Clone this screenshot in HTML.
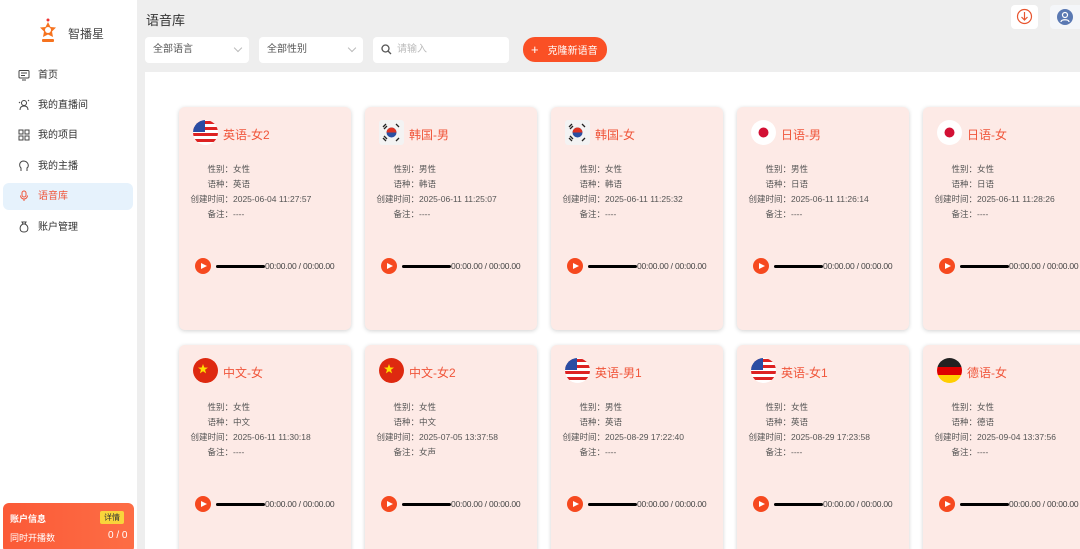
<!DOCTYPE html>
<html style="overflow:hidden;height:549px"><head><meta charset="utf-8"><style>
*{box-sizing:border-box;margin:0;padding:0}
body{width:1080px;height:549px;overflow:hidden;background:#eeeeee;font-family:"Liberation Sans","Noto Sans CJK SC",sans-serif;position:relative;color:#333}
.wrap{position:absolute;left:0;top:0;width:1080px;height:549px;overflow:hidden}
.side{position:absolute;left:0;top:0;width:137px;height:549px;background:#fff}
.logo{position:absolute;left:38px;top:18px}
.brand{position:absolute;left:68px;top:25px;font-size:12px;color:#444}
.mi{position:absolute;left:3px;width:130px;height:27px;font-size:10px;color:#333;line-height:27px;padding-left:35px}
.mi svg{position:absolute;left:15px;top:7px}
.mi.act{background:#e6f2fc;color:#f0553a;border-radius:6px}
.acct{position:absolute;left:3px;top:503px;width:131px;height:50px;background:linear-gradient(90deg,#fb5a37,#fd6d45);border-radius:6px;color:#fff;font-size:9px}
.title{position:absolute;left:146px;top:10px;font-size:13px;color:#333}
.sel{position:absolute;top:37px;height:26px;background:#fff;border-radius:4px;font-size:10px;color:#555;line-height:26px;padding-left:8px}
.chev:after{content:"";position:absolute;right:8px;top:8px;width:5px;height:5px;border-right:1px solid #bbb;border-bottom:1px solid #bbb;transform:rotate(45deg)}
.btn{position:absolute;left:523px;top:37px;width:84px;height:25px;background:#fa5025;border-radius:12px;color:#fff;font-size:10px;line-height:25px;padding-left:8px}
.panel{position:absolute;left:145px;top:72px;width:935px;height:477px;background:#fff}
.card{position:absolute;width:172px;height:223px;background:#fdeae6;border-radius:6px;box-shadow:0 1px 4px rgba(0,0,0,.18)}
.flag{position:absolute;left:14px;top:13px;width:25px;height:25px;border-radius:50%;overflow:hidden}
.ct{position:absolute;left:44px;top:19px;font-size:12px;color:#f0553a}
.info{position:absolute;left:0;top:55px;font-size:8.5px;line-height:15px;color:#555}
.info div{white-space:nowrap}
.info b{display:inline-block;width:54px;text-align:right;font-weight:normal}
.aud{position:absolute;left:16px;top:151px;width:156px;height:16px}
.play{position:absolute;left:0;top:0;width:16px;height:16px;border-radius:50%;background:#f6491f}
.play:after{content:"";position:absolute;left:6px;top:4.5px;border-left:6px solid #fff;border-top:3.5px solid transparent;border-bottom:3.5px solid transparent}
.bar{position:absolute;left:21px;top:7px;width:49px;height:3px;background:#000;border-radius:2px}
.tm{position:absolute;left:70px;top:3px;font-size:8.5px;color:#444;white-space:nowrap;letter-spacing:-0.2px}
</style></head><body><div class="wrap">
<div class="side">
<svg class="logo" width="20" height="26" viewBox="0 0 20 26"><polygon points="10,4 12.5,9 18,9.5 14,13.5 15,19 10,16.5 5,19 6,13.5 2,9.5 7.5,9" fill="#f6731f"/><circle cx="10" cy="12" r="3" fill="#fff"/><circle cx="10" cy="2" r="1.5" fill="#e33"/><rect x="4" y="21" width="12" height="3" fill="#f6731f" rx="1"/></svg>
<div class="brand">智播星</div>
<div class="mi" style="top:62px"><svg width="12" height="12" viewBox="0 0 12 12" fill="none" stroke="#444"><rect x="1" y="1.5" width="10" height="7.5" rx="1"/><path d="M3 4h6M3 6.5h4M4 11h4"/></svg>首页</div>
<div class="mi" style="top:92px"><svg width="12" height="12" viewBox="0 0 12 12" fill="none" stroke="#444"><circle cx="6" cy="4" r="2.5"/><path d="M2 11c0-3 2-4 4-4s4 1 4 4M1 3l1 1M10 2l1-1"/></svg>我的直播间</div>
<div class="mi" style="top:122px"><svg width="12" height="12" viewBox="0 0 12 12" fill="none" stroke="#444"><rect x="1" y="1" width="4" height="4"/><rect x="7" y="1" width="4" height="4"/><rect x="1" y="7" width="4" height="4"/><rect x="7" y="7" width="4" height="4"/></svg>我的项目</div>
<div class="mi" style="top:153px"><svg width="12" height="12" viewBox="0 0 12 12" fill="none" stroke="#444"><path d="M3 11V8C1 6 1 2 5 1c4 0 6 3 5 6l-1 1v3"/></svg>我的主播</div>
<div class="mi act" style="top:183px"><svg width="12" height="12" viewBox="0 0 12 12" fill="none" stroke="#f0553a"><rect x="4" y="1" width="4" height="6" rx="2"/><path d="M2.5 5.5a3.5 3.5 0 007 0M6 9v2"/></svg>语音库</div>
<div class="mi" style="top:214px"><svg width="12" height="12" viewBox="0 0 12 12" fill="none" stroke="#444"><path d="M4 1h4L7 3H5zM5 3C1 5 1 11 6 11s5-6 1-8"/></svg>账户管理</div>
<div class="acct"><div style="position:absolute;left:7px;top:9px;font-weight:bold">账户信息</div><div style="position:absolute;left:97px;top:8px;background:#f9d43b;color:#333;font-size:8px;padding:1px 4px;border-radius:2px">详情</div><div style="position:absolute;left:7px;top:28px">同时开播数</div><div style="position:absolute;left:105px;top:27px;font-size:10px">0 / 0</div></div>
</div>
<div class="title">语音库</div>
<div class="sel chev" style="left:145px;width:104px">全部语言</div>
<div class="sel chev" style="left:259px;width:104px">全部性别</div>
<div class="sel" style="left:373px;width:136px;padding-left:24px;color:#bbb">请输入<svg style="position:absolute;left:8px;top:7px" width="11" height="11" viewBox="0 0 11 11" fill="none" stroke="#555" stroke-width="1.3"><circle cx="4.5" cy="4.5" r="3.5"/><path d="M7 7l3 3"/></svg></div>
<div class="btn"><span style="font-size:13px;margin-right:9px">+</span>克隆新语音</div>
<div style="position:absolute;left:1011px;top:5px;width:27px;height:24px;background:#fff;border-radius:4px"><svg style="position:absolute;left:5px;top:3px" width="17" height="17" viewBox="0 0 17 17" fill="none" stroke="#e8552f" stroke-width="1.2"><circle cx="8.5" cy="8.5" r="7"/><path d="M8.5 4v8M5.5 9l3 3 3-3"/></svg></div>
<div style="position:absolute;left:1050px;top:5px;width:40px;height:24px;background:#f4f6f9;border-radius:4px"><div style="position:absolute;left:7px;top:4px;width:16px;height:16px;border-radius:50%;background:#5a79b3"></div><svg style="position:absolute;left:7px;top:4px" width="16" height="16" viewBox="0 0 16 16" fill="none" stroke="#fff" stroke-width="1.2"><circle cx="8" cy="6" r="2.5"/><path d="M4 13c0-3 8-3 8 0"/></svg></div>
<div class="panel"></div>

<svg width="0" height="0" style="position:absolute">
<defs>
<g id="us"><rect width="25" height="25" fill="#fff"/><rect y="1" width="25" height="3" fill="#d22"/><rect y="7" width="25" height="3" fill="#d22"/><rect y="13" width="25" height="3" fill="#d22"/><rect y="19" width="25" height="3" fill="#d22"/><rect width="12" height="12" fill="#2b4da3"/></g>
<g id="kr"><rect width="25" height="25" fill="#f3f3f3"/><circle cx="12.5" cy="12.5" r="5" fill="#2a4fa2"/><path d="M7.5 12.5a5 5 0 0110 0" fill="#d32"/><path d="M4 7l3-3M5 9l3-3M17 4l3 3M17 21l3-3M4 18l3 3M5 16l3 3" stroke="#222" stroke-width="1.3"/></g>
<g id="jp"><rect width="25" height="25" fill="#fff"/><circle cx="12.5" cy="12.5" r="5" fill="#d21034"/></g>
<g id="cn"><rect width="25" height="25" fill="#de2910"/><polygon points="10,6 11.3,9.5 15,9.6 12,11.8 13.1,15.4 10,13.3 6.9,15.4 8,11.8 5,9.6 8.7,9.5" fill="#ffde00"/></g>
<g id="de"><rect width="25" height="9" fill="#222"/><rect y="9" width="25" height="8" fill="#dd0000"/><rect y="17" width="25" height="8" fill="#ffce00"/></g>
</defs></svg>

<div class="card" style="left:179px;top:107px"><svg class="flag"><use href="#us"/></svg><div class="ct">英语-女2</div><div class="info"><div><b>性别：</b>女性</div><div><b>语种：</b>英语</div><div><b>创建时间：</b>2025-06-04 11:27:57</div><div><b>备注：</b>----</div></div><div class="aud"><div class="play"></div><div class="bar"></div><div class="tm">00:00.00 / 00:00.00</div></div></div>
<div class="card" style="left:365px;top:107px"><svg class="flag" style="border-radius:3px"><use href="#kr"/></svg><div class="ct">韩国-男</div><div class="info"><div><b>性别：</b>男性</div><div><b>语种：</b>韩语</div><div><b>创建时间：</b>2025-06-11 11:25:07</div><div><b>备注：</b>----</div></div><div class="aud"><div class="play"></div><div class="bar"></div><div class="tm">00:00.00 / 00:00.00</div></div></div>
<div class="card" style="left:551px;top:107px"><svg class="flag" style="border-radius:3px"><use href="#kr"/></svg><div class="ct">韩国-女</div><div class="info"><div><b>性别：</b>女性</div><div><b>语种：</b>韩语</div><div><b>创建时间：</b>2025-06-11 11:25:32</div><div><b>备注：</b>----</div></div><div class="aud"><div class="play"></div><div class="bar"></div><div class="tm">00:00.00 / 00:00.00</div></div></div>
<div class="card" style="left:737px;top:107px"><svg class="flag"><use href="#jp"/></svg><div class="ct">日语-男</div><div class="info"><div><b>性别：</b>男性</div><div><b>语种：</b>日语</div><div><b>创建时间：</b>2025-06-11 11:26:14</div><div><b>备注：</b>----</div></div><div class="aud"><div class="play"></div><div class="bar"></div><div class="tm">00:00.00 / 00:00.00</div></div></div>
<div class="card" style="left:923px;top:107px"><svg class="flag"><use href="#jp"/></svg><div class="ct">日语-女</div><div class="info"><div><b>性别：</b>女性</div><div><b>语种：</b>日语</div><div><b>创建时间：</b>2025-06-11 11:28:26</div><div><b>备注：</b>----</div></div><div class="aud"><div class="play"></div><div class="bar"></div><div class="tm">00:00.00 / 00:00.00</div></div></div>

<div class="card" style="left:179px;top:345px"><svg class="flag"><use href="#cn"/></svg><div class="ct">中文-女</div><div class="info"><div><b>性别：</b>女性</div><div><b>语种：</b>中文</div><div><b>创建时间：</b>2025-06-11 11:30:18</div><div><b>备注：</b>----</div></div><div class="aud"><div class="play"></div><div class="bar"></div><div class="tm">00:00.00 / 00:00.00</div></div></div>
<div class="card" style="left:365px;top:345px"><svg class="flag"><use href="#cn"/></svg><div class="ct">中文-女2</div><div class="info"><div><b>性别：</b>女性</div><div><b>语种：</b>中文</div><div><b>创建时间：</b>2025-07-05 13:37:58</div><div><b>备注：</b>女声</div></div><div class="aud"><div class="play"></div><div class="bar"></div><div class="tm">00:00.00 / 00:00.00</div></div></div>
<div class="card" style="left:551px;top:345px"><svg class="flag"><use href="#us"/></svg><div class="ct">英语-男1</div><div class="info"><div><b>性别：</b>男性</div><div><b>语种：</b>英语</div><div><b>创建时间：</b>2025-08-29 17:22:40</div><div><b>备注：</b>----</div></div><div class="aud"><div class="play"></div><div class="bar"></div><div class="tm">00:00.00 / 00:00.00</div></div></div>
<div class="card" style="left:737px;top:345px"><svg class="flag"><use href="#us"/></svg><div class="ct">英语-女1</div><div class="info"><div><b>性别：</b>女性</div><div><b>语种：</b>英语</div><div><b>创建时间：</b>2025-08-29 17:23:58</div><div><b>备注：</b>----</div></div><div class="aud"><div class="play"></div><div class="bar"></div><div class="tm">00:00.00 / 00:00.00</div></div></div>
<div class="card" style="left:923px;top:345px"><svg class="flag"><use href="#de"/></svg><div class="ct">德语-女</div><div class="info"><div><b>性别：</b>女性</div><div><b>语种：</b>德语</div><div><b>创建时间：</b>2025-09-04 13:37:56</div><div><b>备注：</b>----</div></div><div class="aud"><div class="play"></div><div class="bar"></div><div class="tm">00:00.00 / 00:00.00</div></div></div>
</div></body></html>
